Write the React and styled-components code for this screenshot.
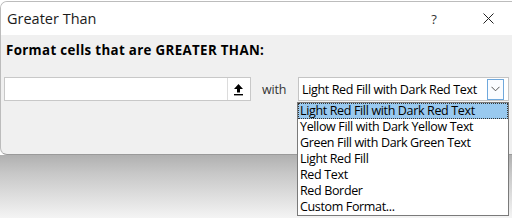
import React from 'react';
import styled, { createGlobalStyle } from 'styled-components';

const GlobalStyle = createGlobalStyle`
  html, body {
    margin: 0;
    padding: 0;
    background: #ffffff;
    overflow: hidden;
  }
  body {
    font-family: "Open Sans", "Liberation Sans", sans-serif;
    color: #000;
  }
`;

const Page = styled.div`
  position: relative;
  width: 512px;
  height: 218px;
  overflow: hidden;
  padding-top: 1px;
  box-sizing: border-box;
`;

const Window = styled.div`
  margin-right: -14px;
  border: 1px solid #bcbcbc;
  border-bottom-color: #9a9a9a;
  border-radius: 7px;
  background: #f0f0f0;
  overflow: hidden;
`;

const TitleBar = styled.div`
  height: 33px;
  background: #ffffff;
  display: flex;
  align-items: center;
  padding-left: 6px;
  padding-right: 11px;
  font-size: 14.5px;
  color: #1b1b1b;
`;

const Title = styled.div`
  flex: 1;
`;

const HelpButton = styled.div`
  width: 20px;
  margin-right: 18px;
  text-align: center;
  font-size: 13px;
  color: #333;
`;

const CloseButton = styled.div`
  width: 52px;
  display: flex;
  justify-content: center;
`;

const Body = styled.div`
  height: 119px;
  padding: 7px 0 0 3px;
  box-sizing: border-box;
`;

const Label = styled.div`
  font-weight: 700;
  font-size: 13.3px;
  letter-spacing: 0.35px;
  line-height: 16px;
  padding-left: 2px;
`;

const Row = styled.div`
  display: flex;
  align-items: center;
  margin-top: 19px;
`;

const ValueBox = styled.div`
  width: 247px;
  height: 24px;
  box-sizing: border-box;
  border: 1px solid #c8c8c8;
  background: #fff;
  display: flex;
  justify-content: flex-end;
  padding: 0 1px 0 0;
`;

const RefButton = styled.div`
  width: 22px;
  height: 22px;
  box-sizing: border-box;
  border-left: 1px solid #dcdcdc;
  background: #fff;
  display: flex;
  align-items: center;
  justify-content: center;
`;

const With = styled.div`
  margin-left: 11px;
  width: 36px;
  font-size: 12.5px;
  letter-spacing: -0.2px;
  color: #333;
`;

const Select = styled.div`
  width: 211px;
  height: 24px;
  box-sizing: border-box;
  border: 1px solid #c4c4c4;
  background: #fff;
  display: flex;
  align-items: center;
  padding-left: 3px;
  font-size: 12.5px;
  letter-spacing: -0.35px;
`;

const SelectText = styled.div`
  flex: 1;
  white-space: nowrap;
`;

const DropButton = styled.div`
  width: 17px;
  height: 21px;
  margin-right: 4px;
  box-sizing: border-box;
  border: 1px solid #6fa8dc;
  background: #fafcff;
  display: flex;
  align-items: center;
  justify-content: center;
`;

const Shadow = styled.div`
  height: 63px;
  background: linear-gradient(#b0b0b0, #c8c8c8 30%, #f4f4f4);
`;

const List = styled.div`
  position: absolute;
  left: 297px;
  top: 102px;
  width: 212px;
  box-sizing: border-box;
  border: 1px solid #7a7a7a;
  background: #fff;
`;

const Item = styled.div`
  height: 16px;
  line-height: 16px;
  padding-left: 2px;
  font-size: 12.5px;
  letter-spacing: -0.35px;
  white-space: nowrap;
  box-sizing: border-box;
  background: ${props => (props.active ? '#99c9ef' : '#fff')};
  outline: ${props => (props.active ? '1px dotted #333' : 'none')};
  outline-offset: -1px;
`;

const items = [
  'Light Red Fill with Dark Red Text',
  'Yellow Fill with Dark Yellow Text',
  'Green Fill with Dark Green Text',
  'Light Red Fill',
  'Red Text',
  'Red Border',
  'Custom Format...',
];

const UpArrow = () => (
  <svg width="11" height="13" viewBox="0 0 11 13">
    <path d="M5.5 1 L10 6 L7 6 L7 9.5 L4 9.5 L4 6 L1 6 Z" fill="#000" />
    <rect x="1" y="11" width="9" height="1.4" fill="#000" />
  </svg>
);

const Chevron = () => (
  <svg width="9" height="6" viewBox="0 0 9 6">
    <path d="M0.5 0.8 L4.5 4.8 L8.5 0.8" fill="none" stroke="#555" strokeWidth="1" />
  </svg>
);

const CloseIcon = () => (
  <svg width="11" height="11" viewBox="0 0 11 11">
    <path d="M0.5 0.5 L10.5 10.5 M10.5 0.5 L0.5 10.5" stroke="#222" strokeWidth="1" />
  </svg>
);

const App = () => (
  <Page>
    <GlobalStyle />
    <Window>
      <TitleBar>
        <Title>Greater Than</Title>
        <HelpButton>?</HelpButton>
        <CloseButton>
          <CloseIcon />
        </CloseButton>
      </TitleBar>
      <Body>
        <Label>Format cells that are GREATER THAN:</Label>
        <Row>
          <ValueBox>
            <RefButton>
              <UpArrow />
            </RefButton>
          </ValueBox>
          <With>with</With>
          <Select>
            <SelectText>{items[0]}</SelectText>
            <DropButton>
              <Chevron />
            </DropButton>
          </Select>
        </Row>
      </Body>
    </Window>
    <Shadow />
    <List>
      {items.map((it, i) => (
        <Item key={it} active={i === 0}>
          {it}
        </Item>
      ))}
    </List>
  </Page>
);

export default App;
